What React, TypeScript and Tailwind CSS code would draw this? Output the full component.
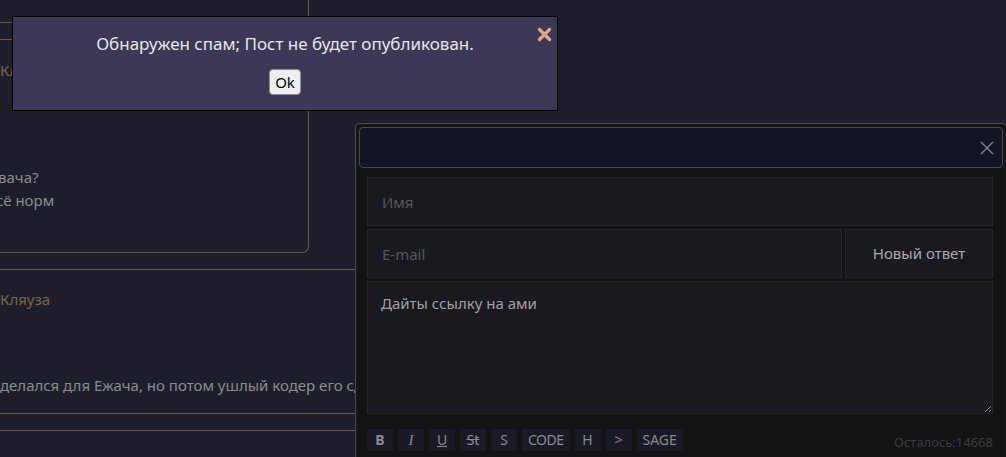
import React from 'react';

const line = 'border-[#6b5848]';

// toolbar markup buttons under the reply textarea
const tags = [
  { key: 'b', label: 'B', cls: 'font-bold' },
  { key: 'i', label: 'I', cls: 'italic font-["Liberation_Serif",serif] text-[15px]' },
  { key: 'u', label: 'U', cls: 'underline' },
  { key: 'st', label: 'St', cls: 'line-through' },
  { key: 's', label: 'S', cls: '' },
  { key: 'code', label: 'CODE', cls: 'text-[13px] tracking-[-0.5px]' },
  { key: 'h', label: 'H', cls: '' },
  { key: 'q', label: '>', cls: '' },
  { key: 'sage', label: 'SAGE', cls: '' },
];

const Thread: React.FC = () => (
  <div className="w-[355px] flex flex-col text-[15px]">
    {/* post above, cut at the left edge */}
    <div className={`w-[309px] h-[253px] flex flex-col border-r border-b ${line} rounded-br-[7px]`}>
      <div className={`mt-[22px] border-t ${line}`} />
      <div className={`mt-[16px] border-t ${line}`} />
      <div className="mt-[19px] text-[#7a6454] leading-[22px]">Кляуза</div>
      <div className="mt-[85px] text-[#8b8b94] leading-[23px]">
        <div className="-ml-[2px]">вача?</div>
        <div className="-ml-[4px]">сё норм</div>
      </div>
    </div>

    <div className={`mt-[16px] border-t ${line}`} />
    <div className="mt-[18px] text-[#7a6454] leading-[22px]">Кляуза</div>
    <div className="mt-[64px] text-[#8b8b94] leading-[22px] whitespace-nowrap">
      делался для Ежача, но потом ушлый кодер его сделал
    </div>
    <div className={`mt-[17px] border-t ${line}`} />
    <div className={`mt-[16px] border-t ${line}`} />
  </div>
);

const ReplyForm: React.FC = () => (
  <div className="absolute left-[355px] top-[123px] w-[652px] h-[345px] border border-[#4c4c4f] rounded-[4px] bg-[#151515] p-[3px]">
    <div className="h-[41px] border border-[#47474f] rounded-[4px] bg-[#141428] flex items-center justify-end pr-[8px]">
      <svg width="14" height="14" viewBox="0 0 14 14" className="stroke-[#8a8a8a]">
        <path d="M1 1 L13 13 M13 1 L1 13" strokeWidth="1.3" />
      </svg>
    </div>

    <div className="bg-[#131313] pl-[8px] pr-[10px] pt-[9px] h-full text-[15px]">
      <input
        placeholder="Имя"
        className="block w-full h-[49px] bg-[#19191f] border border-[#25252b] px-[14px] text-[#aaa] placeholder:text-[#57575c] outline-none"
      />
      <div className="flex gap-[3px] mt-[3px]">
        <input
          placeholder="E-mail"
          className="block flex-1 h-[49px] bg-[#19191f] border border-[#25252b] px-[14px] text-[#aaa] placeholder:text-[#57575c] outline-none"
        />
        <button className="w-[148px] h-[49px] bg-[#19191f] border border-[#25252b] text-[#a9a9ad]">
          Новый ответ
        </button>
      </div>
      <textarea
        readOnly
        defaultValue="Дайты ссылку на ами"
        className="block w-full h-[133px] mt-[3px] bg-[#19191f] border border-[#25252b] px-[13px] pt-[10px] text-[#a0a0a4] leading-[22px] outline-none"
      />

      <div className="flex items-center mt-[13px]">
        <div className="flex gap-[5px]">
          {tags.map((t) => (
            <span
              key={t.key}
              className={`h-[22px] min-w-[26px] px-[6px] flex items-center justify-center bg-[#1a1a25] text-[#8a8a90] text-[14px] ${t.cls}`}
            >
              {t.label}
            </span>
          ))}
        </div>
        <span className="ml-auto text-[13px] text-[#3c3c40] mt-[6px]">Осталось:14668</span>
      </div>
    </div>
  </div>
);

const SpamAlert: React.FC = () => (
  <div className="absolute left-[12px] top-[16px] w-[546px] h-[95px] bg-[#3c3855] border border-black flex flex-col items-center">
    <div className="mt-[16px] text-[17px] leading-[22px] text-[#e6e6ea]">
      Обнаружен спам; Пост не будет опубликован.
    </div>
    <button className="mt-[14px] w-[32px] h-[26px] bg-[#efefef] border border-[#8f8f8f] rounded-[4px] text-[15px] text-black">
      Ok
    </button>
    <svg width="15" height="15" viewBox="0 0 15 15" className="absolute right-[5px] top-[10px]">
      <path d="M2.5 2.5 L12.5 12.5 M12.5 2.5 L2.5 12.5" stroke="#d8a887" strokeWidth="3.4" strokeLinecap="round" />
    </svg>
  </div>
);

export default function App() {
  return (
    <div className="relative w-[1006px] h-[457px] overflow-hidden bg-[#1e1e2a] font-['Noto_Sans',sans-serif]">
      <Thread />
      <ReplyForm />
      <SpamAlert />
    </div>
  );
}
